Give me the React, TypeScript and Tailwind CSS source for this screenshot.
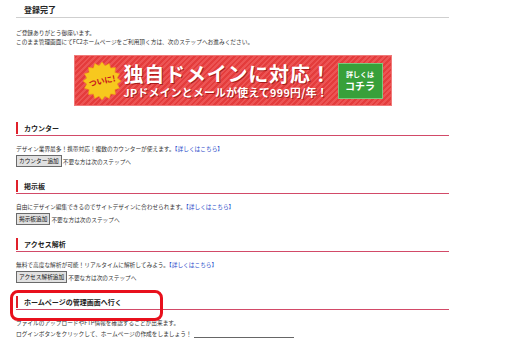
import React from 'react';

interface Section {
  title: string;
  desc: string;
  button: string;
}

const sections: Section[] = [
  { title: 'カウンター', desc: 'デザイン業界最多！携帯対応！複数のカウンターが使えます。', button: 'カウンター追加' },
  { title: '掲示板', desc: '自由にデザイン編集できるのでサイトデザインに合わせられます。', button: '掲示板追加' },
  { title: 'アクセス解析', desc: '無料で高度な解析が可能！リアルタイムに解析してみよう。', button: 'アクセス解析追加' },
];

const Heading: React.FC<{ title: string }> = ({ title }) => (
  <div className="flex items-center h-[15px] border-b border-[#d24a68]">
    <span className="w-[2px] h-[12px] bg-[#e0202a]" />
    <span className="ml-[6px] text-[7px] leading-[10px] font-bold text-[#222]">{title}</span>
  </div>
);

// yellow starburst behind "ついに!"
const Starburst: React.FC = () => {
  const pts: string[] = [];
  const n = 16;
  for (let i = 0; i < n * 2; i++) {
    const r = i % 2 === 0 ? 19 : 15.5;
    const a = (Math.PI * i) / n;
    pts.push(`${(20 + r * Math.cos(a)).toFixed(2)},${(20 + r * Math.sin(a)).toFixed(2)}`);
  }
  return (
    <svg width="40" height="40" viewBox="0 0 40 40" className="absolute inset-0">
      <polygon points={pts.join(' ')} fill="#f7c81e" stroke="#f0a010" strokeWidth="0.6" />
    </svg>
  );
};

const Banner: React.FC = () => (
  <div className="mx-auto mt-[9px] w-[318px] h-[51px] border border-[#f07a7a] bg-[repeating-linear-gradient(135deg,#e43c3c_0px,#e43c3c_2px,#ec5454_2px,#ec5454_4px)] flex items-center">
    <div className="relative ml-[7px] w-[40px] h-[40px] shrink-0">
      <Starburst />
      <span className="absolute inset-0 flex items-center justify-center text-[8px] font-bold text-[#c8161d] -rotate-12">ついに!</span>
    </div>
    <div className="ml-[2px] flex flex-col text-white font-bold [text-shadow:1px_1px_0_#a81c1c]">
      <span className="text-[20px] leading-[22px] tracking-[0.8px]">独自ドメインに対応！</span>
      <span className="mt-[1px] text-[10.8px] leading-[13px] tracking-[0.3px]">JPドメインとメールが使えて999円/年！</span>
    </div>
    <div className="ml-[6px] w-[45px] h-[36px] bg-[#38a03a] border border-[#7cc87c] flex flex-col items-center justify-center text-white font-bold">
      <span className="text-[7px] leading-[10px]">詳しくは</span>
      <span className="text-[10px] leading-[13px]">コチラ</span>
    </div>
  </div>
);

export default function App() {
  return (
    <div className="w-[512px] h-[345px] overflow-hidden bg-white font-['Noto_Sans_CJK_JP',sans-serif] text-[#333]">
      <div className="ml-[16px] w-[433px] pt-[3px]">
        {/* Title */}
        <div className="h-[15px] flex items-center pl-[8px] border-b border-[#cfcfcf]">
          <span className="text-[8px] leading-[12px] font-bold text-[#222]">登録完了</span>
        </div>

        <div className="mt-[10px] text-[5.7px] leading-[9px]">
          <p>ご登録ありがとう御座います。</p>
          <p>このまま管理画面にてFC2ホームページをご利用頂く方は、次のステップへお進みください。</p>
        </div>

        <Banner />

        <div className="mt-[15px] flex flex-col gap-[12px]">
          {sections.map((s) => (
            <div key={s.title}>
              <Heading title={s.title} />
              <p className="mt-[8px] text-[5.7px] leading-[9px]">
                {s.desc}
                <span className="text-[#2346c8]">【詳しくはこちら】</span>
              </p>
              <div className="mt-[2px] flex items-center h-[12px]">
                <button className="h-[12px] px-[2px] border border-[#6a6a6a] bg-[#e1e1e1] text-[5.7px] leading-[10px] text-[#111]">
                  {s.button}
                </button>
                <span className="ml-[1px] text-[5.7px] leading-[9px]">不要な方は次のステップへ</span>
              </div>
            </div>
          ))}

          {/* Admin panel section */}
          <div className="relative">
            <Heading title="ホームページの管理画面へ行く" />
            <div className="absolute left-[-6px] top-[-5px] w-[153px] h-[31px] border-[3px] border-[#e8101c] rounded-[8px]" />
            <p className="mt-[8px] text-[5.7px] leading-[9px]">ファイルのアップロードやFTP情報を確認することが出来ます。</p>
            <div className="flex items-start">
              <p className="mt-[2px] text-[5.7px] leading-[9px]">ログインボタンをクリックして、ホームページの作成をしましょう！</p>
              <div className="ml-[2px] mt-[10px] w-[100px] h-[20px] border-t border-[#666]" />
            </div>
          </div>
        </div>
      </div>
    </div>
  );
}
